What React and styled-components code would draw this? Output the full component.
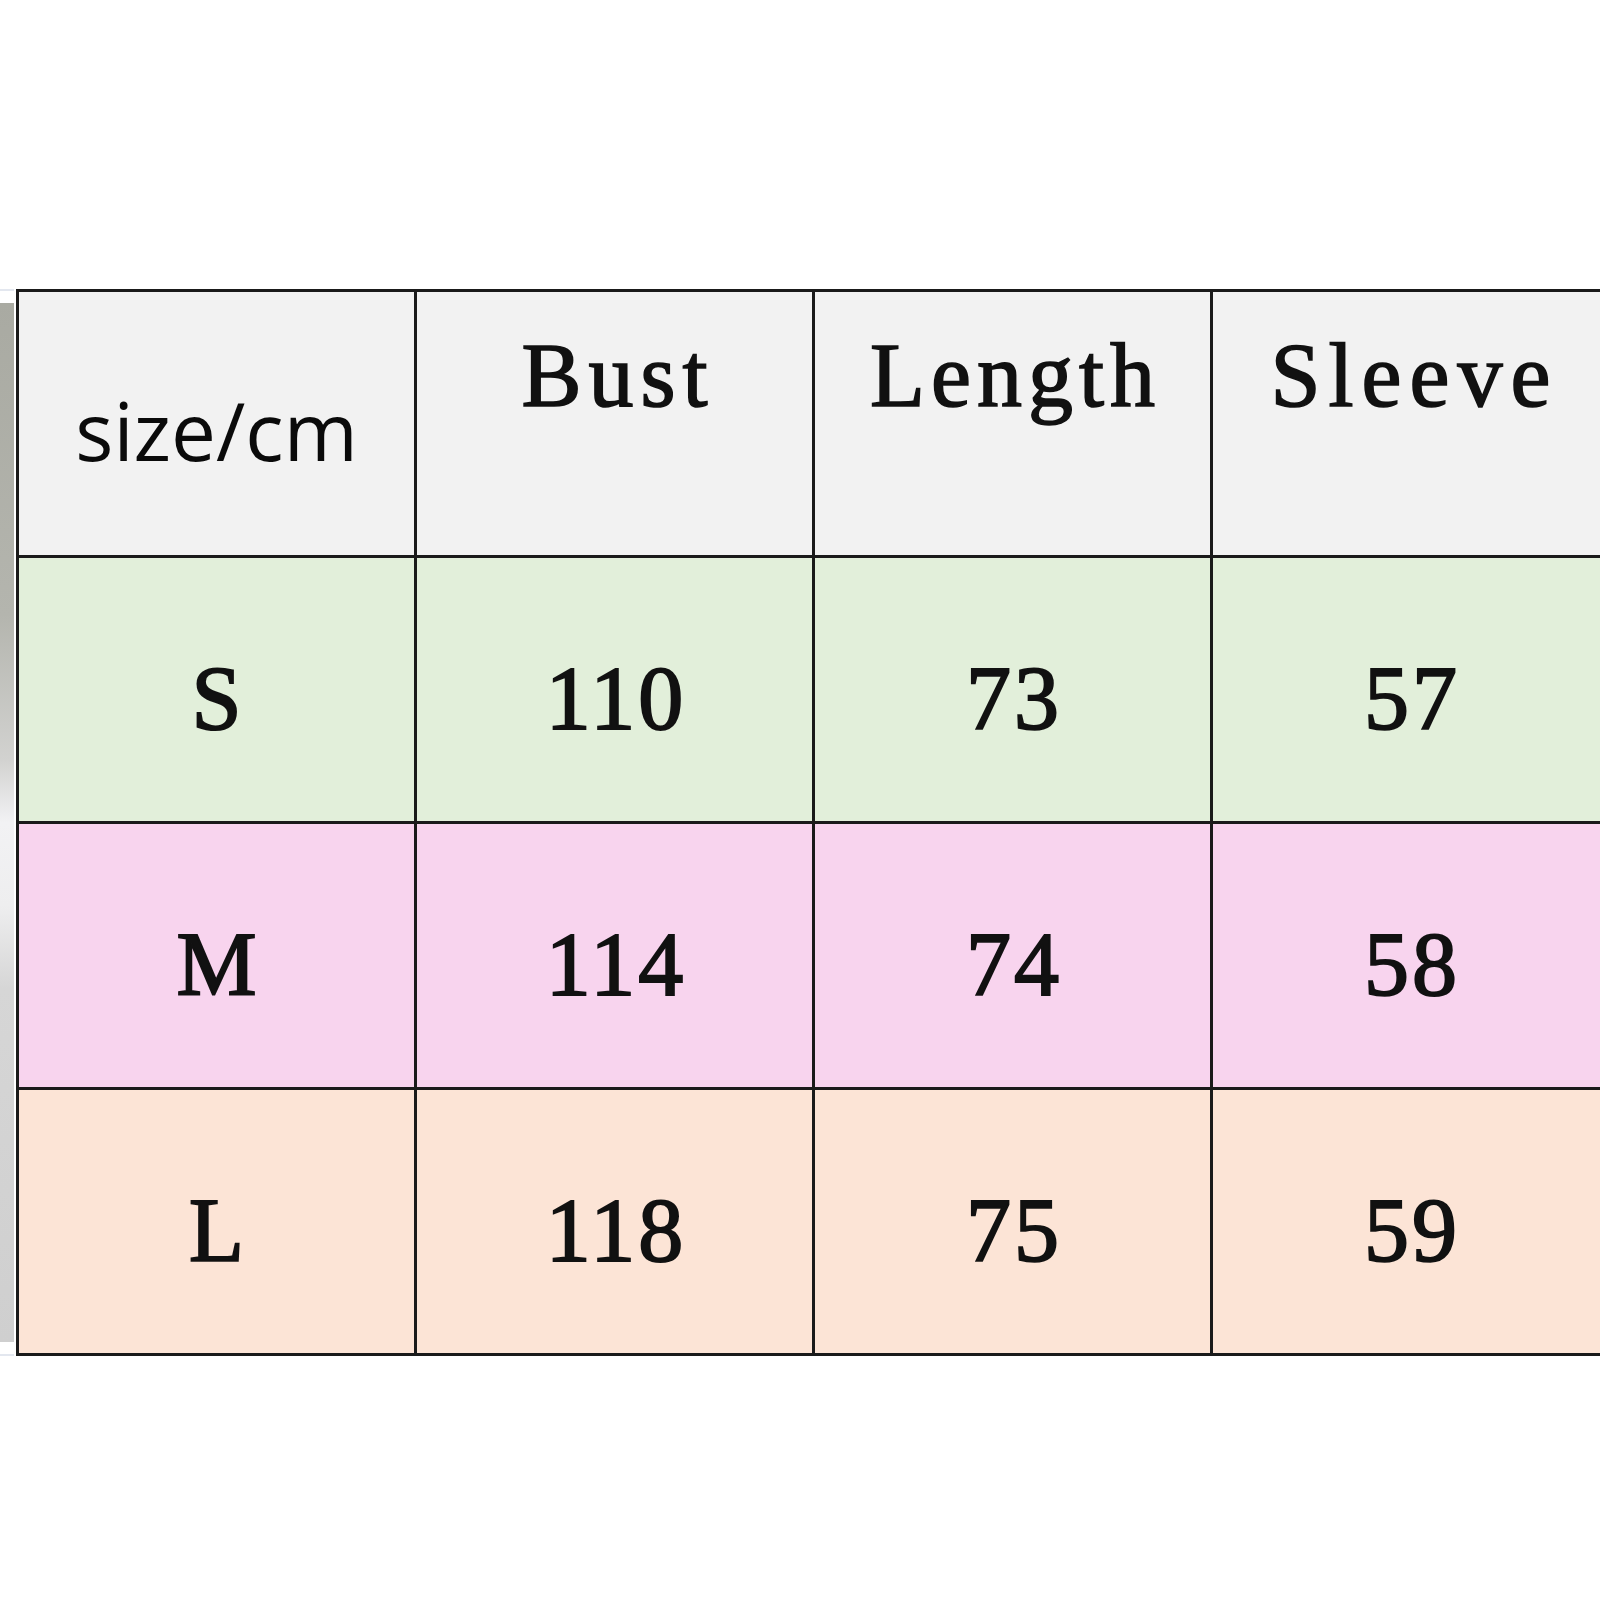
import React from 'react'
import styled, { createGlobalStyle } from 'styled-components'

const GlobalStyle = createGlobalStyle`
  html, body {
    margin: 0;
    padding: 0;
    background: #ffffff;
    overflow: hidden;
  }
`

const rows = [
  { size: 'S', bust: '110', length: '73', sleeve: '57', bg: '#e2efda' },
  { size: 'M', bust: '114', length: '74', sleeve: '58', bg: '#f8d4ee' },
  { size: 'L', bust: '118', length: '75', sleeve: '59', bg: '#fce4d6' },
]

const headers = [
  { text: 'Bust', spacing: 7 },
  { text: 'Length', spacing: 6 },
  { text: 'Sleeve', spacing: 8 },
]

const App = () => {
  return (
    <Page>
      <GlobalStyle />
      <Edge>
        <GreyBar />
      </Edge>
      <Table>
        <HeadCell>
          <SizeLabel>size/cm</SizeLabel>
        </HeadCell>
        {headers.map((h) => (
          <HeadCell key={h.text} top>
            <Label spacing={h.spacing}>{h.text}</Label>
          </HeadCell>
        ))}
        {rows.map((r) => (
          <React.Fragment key={r.size}>
            <Cell bg={r.bg}><Value>{r.size}</Value></Cell>
            <Cell bg={r.bg}><Value>{r.bust}</Value></Cell>
            <Cell bg={r.bg}><Value>{r.length}</Value></Cell>
            <Cell bg={r.bg}><Value>{r.sleeve}</Value></Cell>
          </React.Fragment>
        ))}
      </Table>
    </Page>
  )
}

export default App

const Page = styled.div`
  width: 1600px;
  height: 1600px;
  padding-top: 289px;
  box-sizing: border-box;
  display: flex;
  align-items: flex-start;
  gap: 2px;
`

const Edge = styled.div`
  width: 14px;
  height: 1067px;
  flex-shrink: 0;
  box-sizing: border-box;
  border-top: 2px solid #e3e7ef;
  border-bottom: 2px solid #e3e7ef;
  padding: 12px 0;
  display: flex;
`

const GreyBar = styled.div`
  width: 10px;
  flex: 1;
  background: linear-gradient(
    to bottom,
    #a9aaa2 0%,
    #b4b5ae 30%,
    #d2d2d0 44%,
    #f2f2f4 50%,
    #eeeeef 58%,
    #d6d6d6 66%,
    #cfcfcf 100%
  );
`

const Table = styled.div`
  flex-shrink: 0;
  display: grid;
  grid-template-columns: repeat(4, 398px);
  grid-auto-rows: 266px;
  border-top: 3px solid #1a1a1a;
  border-left: 3px solid #1a1a1a;
`

const Cell = styled.div`
  box-sizing: border-box;
  background: ${(p) => p.bg};
  border-right: 3px solid #1a1a1a;
  border-bottom: 3px solid #1a1a1a;
  display: flex;
  justify-content: center;
  align-items: center;
  padding-top: 19px;
`

const HeadCell = styled(Cell)`
  background: #f2f2f2;
  align-items: ${(p) => (p.top ? 'flex-start' : 'center')};
  padding-top: ${(p) => (p.top ? '39px' : '13px')};
`

const SizeLabel = styled.span`
  font-family: 'Open Sans', 'Noto Sans', sans-serif;
  font-size: 80px;
  line-height: 1;
  color: #0a0a0a;
`

const Label = styled.span`
  font-family: 'Liberation Serif', 'Times New Roman', serif;
  font-size: 90px;
  line-height: 1;
  color: #111;
  -webkit-text-stroke: 1.6px #111;
  letter-spacing: ${(p) => p.spacing}px;
  margin-right: -${(p) => p.spacing}px;
`

const Value = styled.span`
  font-family: 'Liberation Serif', 'Times New Roman', serif;
  font-size: 90px;
  line-height: 1;
  color: #111;
  -webkit-text-stroke: 2px #111;
  letter-spacing: 3px;
  margin-right: -3px;
`
